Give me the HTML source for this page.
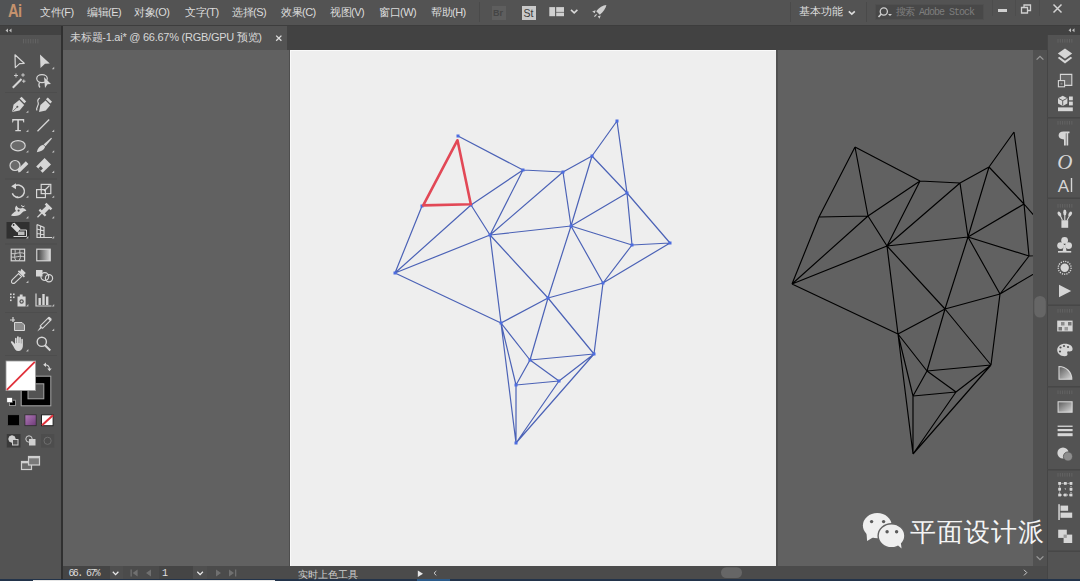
<!DOCTYPE html>
<html><head><meta charset="utf-8">
<style>
*{margin:0;padding:0;box-sizing:border-box}
html,body{width:1080px;height:581px;overflow:hidden;background:#535353;font-family:"Liberation Sans",sans-serif;position:relative}
div,span,svg{position:absolute}
#menubar{left:0;top:0;width:1080px;height:25px;background:#535353}
#menuline{left:0;top:25px;width:1080px;height:1px;background:#3d3d3d}
#tabrow{left:63px;top:26px;width:984px;height:24px;background:#424242}
#tab{left:63px;top:26px;width:224px;height:24px;background:#535353}
#ltool{left:0;top:26px;width:61px;height:554px;background:#535353}
#ltoolhead{left:0;top:26px;width:61px;height:9px;background:#424242}
#lsep{left:61px;top:26px;width:2px;height:553px;background:#303030}
#canvas{left:63px;top:50px;width:970px;height:516px;background:#616161}
#artboard{left:290px;top:50px;width:486px;height:516px;background:#eeeeee;box-shadow:inset 1px 1px 0 #f9f9f9,-1px 0 0 #4e4e4e}
#abshadow{left:776px;top:50px;width:2px;height:518px;background:#505050}
#vscroll{left:1033px;top:50px;width:14px;height:516px;background:#515151}
#rpanel{left:1047px;top:26px;width:33px;height:554px;background:#535353}
#rsep{left:1047px;top:26px;width:1px;height:553px;background:#454545}
#rhead{left:1047px;top:26px;width:33px;height:9px;background:#424242}
#status{left:63px;top:566px;width:984px;height:13px;background:#4b4b4b}
#bottom{left:0;top:579px;width:1080px;height:2px;background:#22334a}
.menu{top:5.5px;font-size:11px;line-height:13px;color:#dcdcdc;white-space:nowrap;letter-spacing:-0.5px}
.t{white-space:nowrap}
</style></head><body>
<div id="menubar"></div>
<div id="menuline"></div>
<div id="tabrow"></div>
<div id="tab"></div>
<div id="ltool"></div>
<div id="ltoolhead"></div>
<div id="lsep"></div>
<div id="canvas"></div>
<div id="artboard"></div>
<div id="abshadow"></div>
<svg style="left:0;top:0" width="1080" height="581" viewBox="0 0 1080 581">
<defs><clipPath id="cv"><rect x="63" y="50" width="970" height="516"/></clipPath></defs>
<g clip-path="url(#cv)">
<path d="M855 147L920 181 M819 217L792 284 M792 284L868 216 M792 284L887 246 M792 284L898 334 M868 216L920 181 M868 216L887 246 M920 181L887 246 M920 181L960 183 M960 183L887 246 M960 183L989 167 M960 183L968 237 M989 167L1014 132 M989 167L1024 204 M989 167L968 237 M1014 132L1024 204 M1024 204L968 237 M1024 204L1029 256 M1024 204L1067 254 M1029 256L1067 254 M968 237L1029 256 M887 246L968 237 M968 237L945 309 M968 237L1000 294 M1029 256L1000 294 M1067 254L1000 294 M887 246L945 309 M887 246L898 334 M898 334L945 309 M945 309L1000 294 M1000 294L991 365 M945 309L991 365 M945 309L927 371 M898 334L927 371 M898 334L913 396 M898 334L913 454 M927 371L991 365 M927 371L913 396 M927 371L956 392 M913 396L956 392 M956 392L991 365 M913 396L913 454 M956 392L913 454 M991 365L913 454 M855 147L819 217 M855 147L868 216 M819 217L868 216" stroke="#000" stroke-width="1.15" fill="none"/>
<path d="M458 136L523 170 M422 206L395 273 M395 273L471 205 M395 273L490 235 M395 273L501 323 M471 205L523 170 M471 205L490 235 M523 170L490 235 M523 170L563 172 M563 172L490 235 M563 172L592 156 M563 172L571 226 M592 156L617 121 M592 156L627 193 M592 156L571 226 M617 121L627 193 M627 193L571 226 M627 193L632 245 M627 193L670 243 M632 245L670 243 M571 226L632 245 M490 235L571 226 M571 226L548 298 M571 226L603 283 M632 245L603 283 M670 243L603 283 M490 235L548 298 M490 235L501 323 M501 323L548 298 M548 298L603 283 M603 283L594 354 M548 298L594 354 M548 298L530 360 M501 323L530 360 M501 323L516 385 M501 323L516 443 M530 360L594 354 M530 360L516 385 M530 360L559 381 M516 385L559 381 M559 381L594 354 M516 385L516 443 M559 381L516 443 M594 354L516 443" stroke="#4b62b6" stroke-width="1.2" fill="none"/>
<g fill="#4d6de0"><rect x="456.5" y="134.5" width="3" height="3"/><rect x="521.5" y="168.5" width="3" height="3"/><rect x="561.5" y="170.5" width="3" height="3"/><rect x="590.5" y="154.5" width="3" height="3"/><rect x="615.5" y="119.5" width="3" height="3"/><rect x="625.5" y="191.5" width="3" height="3"/><rect x="668.5" y="241.5" width="3" height="3"/><rect x="630.5" y="243.5" width="3" height="3"/><rect x="569.5" y="224.5" width="3" height="3"/><rect x="488.5" y="233.5" width="3" height="3"/><rect x="469.5" y="203.5" width="3" height="3"/><rect x="420.5" y="204.5" width="3" height="3"/><rect x="393.5" y="271.5" width="3" height="3"/><rect x="601.5" y="281.5" width="3" height="3"/><rect x="499.5" y="321.5" width="3" height="3"/><rect x="546.5" y="296.5" width="3" height="3"/><rect x="528.5" y="358.5" width="3" height="3"/><rect x="592.5" y="352.5" width="3" height="3"/><rect x="514.5" y="383.5" width="3" height="3"/><rect x="557.5" y="379.5" width="3" height="3"/><rect x="514.5" y="441.5" width="3" height="3"/></g>
<path d="M457.5 140.2L423.2 205.4L470.8 204.3Z" stroke="#e24856" stroke-width="2.6" fill="none" stroke-linejoin="round"/>
</g>
</svg>
<div id="vscroll"></div>
<div id="rpanel"></div>
<div id="rsep"></div>
<div id="rhead"></div>
<div id="status"></div>
<div id="bottom"></div>
<!--MENU-->
<div style="left:0;top:0;width:30px;height:25px;background:#515355"></div><span class="t" style="left:7.5px;top:0.5px;font-size:17.5px;line-height:20px;font-weight:bold;color:#c4926d;letter-spacing:-0.8px;transform:scaleX(0.84);transform-origin:0 0">Ai</span>
<span class="menu" style="left:40px">文件(F)</span>
<span class="menu" style="left:87px">编辑(E)</span>
<span class="menu" style="left:134px">对象(O)</span>
<span class="menu" style="left:185px">文字(T)</span>
<span class="menu" style="left:232px">选择(S)</span>
<span class="menu" style="left:281px">效果(C)</span>
<span class="menu" style="left:330px">视图(V)</span>
<span class="menu" style="left:379px">窗口(W)</span>
<span class="menu" style="left:431px">帮助(H)</span>
<div style="left:479px;top:2px;width:1px;height:20px;background:#4a4a4a"></div>
<div style="left:492px;top:6px;width:14px;height:14px;background:#5e5e5e"></div>
<span class="t" style="left:493px;top:8px;font-size:9px;line-height:10px;color:#454545;font-weight:bold">Br</span>
<div style="left:522px;top:6px;width:14px;height:14px;background:#c9c9c9"></div>
<span class="t" style="left:523.5px;top:7px;font-size:10.5px;line-height:12px;color:#3a3a3a">St</span>
<svg style="left:545px;top:2px" width="70" height="20" viewBox="545 2 70 20">
<g fill="#d0d0d0">
<rect x="549.3" y="7.1" width="5.8" height="9.1"/><rect x="556.2" y="7.1" width="7.8" height="4.8"/><rect x="556.2" y="12.6" width="7.8" height="3.6"/>
</g>
<path d="M571 9.8L574.2 12.8L577.4 9.8" stroke="#d8d8d8" stroke-width="1.6" fill="none"/>
<path d="M606.4 5C603 5.2 599 7.6 596.2 11.2L599.8 14.8C603.4 12 605.8 8 606.4 5Z" fill="#cfcfcf"/>
<path d="M595.6 10.2L592.2 11.6L594.8 13.2Z M600.8 15.4L599.4 18.8L597.8 16.2Z" fill="#cfcfcf"/>
<path d="M596.6 14.4L594.4 16.6" stroke="#cfcfcf" stroke-width="1.2"/>
</svg>
<div style="left:790px;top:2px;width:1px;height:20px;background:#4a4a4a"></div>
<span class="menu" style="left:799px;top:5px;font-size:10.5px;letter-spacing:-0.1px">基本功能</span>
<svg style="left:845px;top:8px" width="14" height="10" viewBox="0 0 14 10"><path d="M3.8 3.4L6.8 6.2L9.8 3.4" stroke="#dcdcdc" stroke-width="1.6" fill="none"/></svg>
<div style="left:866px;top:2px;width:1px;height:20px;background:#4a4a4a"></div>
<div style="left:875px;top:4px;width:109px;height:16px;background:#484848;border:1px solid #4f4f4f"></div>
<svg style="left:875px;top:4px" width="20" height="16" viewBox="0 0 20 16">
<circle cx="8.8" cy="7.5" r="3.6" stroke="#cfcfcf" stroke-width="1.3" fill="none"/>
<path d="M6.3 10L3.5 13" stroke="#cfcfcf" stroke-width="1.6"/>
<path d="M13 10h4l-2 2z" fill="#cfcfcf"/>
</svg>
<span class="t" style="left:896px;top:6.5px;font-size:10px;line-height:12px;color:#7e7e7e;font-family:'Liberation Mono',monospace;letter-spacing:-1px">搜索 Adobe Stock</span>
<div style="left:992px;top:0;width:1px;height:16px;background:#4d4d4d"></div>
<div style="left:1015px;top:0;width:1px;height:16px;background:#4d4d4d"></div>
<div style="left:1039px;top:0;width:1px;height:16px;background:#4d4d4d"></div>
<div style="left:998px;top:9px;width:9px;height:3px;background:#d0d0d0"></div>
<svg style="left:1018px;top:2px" width="16" height="13" viewBox="0 0 16 13">
<path d="M3.5 5.5h6v5.5h-6z M6 5.5V3h6.5v5.5H9.5" stroke="#d0d0d0" stroke-width="1.3" fill="none"/>
</svg>
<svg style="left:1050px;top:2px" width="15" height="13" viewBox="0 0 15 13">
<path d="M3.5 2.5L11.5 10.5M11.5 2.5L3.5 10.5" stroke="#d4d4d4" stroke-width="1.5"/>
</svg>
<!--/MENU-->
<!--TAB-->
<span class="t" style="left:70px;top:31px;font-size:11px;line-height:13px;color:#d8d8d8;letter-spacing:-0.25px">未标题-1.ai* @ 66.67% (RGB/GPU 预览)</span>
<!--/TAB-->
<!--TOOLBAR-->
<svg style="left:0;top:25px" width="62" height="556" viewBox="0 25 62 556">
<defs>
<linearGradient id="gg" x1="0" x2="1" y1="0" y2="0"><stop offset="0" stop-color="#3a3a3a"/><stop offset="1" stop-color="#d8d8d8"/></linearGradient>
<linearGradient id="gp" x1="0" x2="1" y1="0" y2="1"><stop offset="0" stop-color="#b07ab8"/><stop offset="1" stop-color="#6e3a78"/></linearGradient>
</defs>
<!-- header arrows -->
<path d="M8 28.5L5.5 30.5L8 32.5Z M11.5 28.5L9 30.5L11.5 32.5Z" fill="#bdbdbd"/>
<!-- grip -->
<g fill="#636363"><rect x="23.0" y="39" width="1" height="4.4"/><rect x="25.4" y="39" width="1" height="4.4"/><rect x="27.8" y="39" width="1" height="4.4"/><rect x="30.2" y="39" width="1" height="4.4"/><rect x="32.6" y="39" width="1" height="4.4"/><rect x="35.0" y="39" width="1" height="4.4"/><rect x="37.4" y="39" width="1" height="4.4"/></g>
<g stroke="#d6d6d6" fill="none" stroke-width="1.2">
<!-- selection -->
<path d="M15 54.8L24.2 63.3L19.6 63.6L15.3 67.6Z" stroke-linejoin="round"/>
<path d="M11.2 186.2L16 183.2V189.2Z" fill="#d6d6d6" stroke="none"/>
<!-- magic wand -->
<path d="M12.8 87.8L21.5 79" stroke-width="2"/>
<path d="M16 73.5v4M14 75.5h4 M23 73.2v3.6M21.2 75h3.6 M23.8 79.5v3.4M22.1 81.2h3.4" stroke-width="0.9"/>
<!-- lasso -->
<ellipse cx="42" cy="78.6" rx="5.3" ry="4" />
<path d="M39.5 82.5q-1.5 3 0.5 5"/>
<!-- curvature line -->
<path d="M37 110.5c-2-3 3-5 1-8.5c-0.8-1.5 0.5-3.5 2-4"/>
<!-- line -->
<path d="M37.5 131.2L49.2 119.5" stroke-width="1.3"/>
<!-- ellipse -->
<ellipse cx="18" cy="145.7" rx="7.2" ry="5.1" fill="#6b6b6b"/>
<!-- shaper -->
<circle cx="15" cy="165.5" r="5" fill="#6b6b6b"/>
<!-- rotate -->
<path d="M14.6 186.2A6.2 6.2 0 1 1 12.4 193.4" stroke-width="1.5"/><path d="M12.4 193.4A6.2 6.2 0 0 0 18.4 197" stroke-dasharray="1 1"/>
<!-- scale -->
<rect x="36.6" y="189.6" width="8.8" height="8" />
<rect x="41.2" y="184.4" width="9.6" height="9.2" />
<path d="M44 191L49.5 185.5"/>
<!-- perspective grid -->
<path d="M37 224.5V237.5H52 M37 224.5L44 227.5V237.5 M37 229L44 231 M37 233.5L44 234.5 M40.5 226v11.5"/>
<!-- mesh -->
<rect x="11.2" y="249.2" width="13.4" height="11.6"/>
<path d="M15 249.5c1 4-2 7 1 11 M20 249.5c-1 4 2 7-1 11 M11.5 253.5c4 1 7-2 13 0 M11.5 257c4 1 8-2 13 0" stroke-width="0.9"/>
<!-- gradient -->
<rect x="36.8" y="249.2" width="13.4" height="11.6" fill="url(#gg)"/>
<!-- blend -->
<circle cx="44.8" cy="276.6" r="3.9"/><circle cx="49" cy="278.3" r="3.6"/>
<!-- graph -->
<path d="M36 293.5V306H51.5"/>
<!-- artboard -->
<path d="M13 317v5 M10 320h5"/>
<!-- zoom -->
<circle cx="41.8" cy="341.8" r="4.6" stroke-width="1.4"/>
<path d="M45 345.2L50.3 350.5" stroke-width="2"/>
</g>
<g fill="#d6d6d6">
<!-- direct selection -->
<path d="M40 54.5L49.8 63.5L45 63.8L40.5 68Z"/>
<!-- lasso cursor -->
<path d="M44 77L51 84L47.5 84.2L45 88Z"/>
<!-- pen -->
<path d="M12 112L13.6 104.6L19.3 100L24.2 104.9L19.6 110.5Z"/>
<path d="M19.6 98.6L21.6 96.8L26.2 101.4L24.4 103.2Z"/>
<circle cx="17.4" cy="106.7" r="1" fill="#535353"/>
<path d="M12.5 111.5L17 107.2" stroke="#535353" stroke-width="0.7"/>
<!-- curvature pen -->
<path d="M39 112L40.4 105L45.6 100.6L50.2 105.2L45.8 110.6Z"/>
<path d="M45.9 99.2L47.8 97.5L52 101.7L50.3 103.4Z"/>
<!-- type -->
<path d="M12.2 119H24.2V122.4H23.4L22.8 120.4H18.9V129.9H20.9V131.2H15.3V129.9H17.3V120.4H13.6L13 122.4H12.2Z"/>
<!-- paintbrush -->
<path d="M51.2 137.8L52 138.6L45.5 146.3L43.6 144.4Z"/>
<path d="M43.2 144.8L45.2 146.8C44 150 41 151.8 36.8 152.2C37.6 148.6 39.5 145.8 43.2 144.8Z"/>
<!-- shaper pencil -->
<path d="M18.5 172.6L17.6 169.5L25.8 161.3L28.4 163.9L20.2 172.1Z"/>
<!-- eraser -->
<path d="M36.2 166.4L44.6 158L51 164.4L42.6 172.8Z"/>
<path d="M38.2 168.4L40.6 166L43 168.4L40.6 170.8Z" fill="#535353"/>
<!-- width tool -->
<path d="M11 215.5C12.5 213.5 14 212 16.2 211C14.6 209.6 14.6 207.2 16.4 205.4C17.4 207.2 18.6 208.4 20.2 208.6C22.4 207.6 25 208 26.4 211C24.6 210.6 23 211.2 21.8 213C20 215.6 15.6 216.8 11 215.5Z"/>
<circle cx="18.6" cy="210.6" r="1.1" fill="#535353"/>
<path d="M21.5 205L22.5 207L24.5 206" stroke="#d6d6d6" stroke-width="1" fill="none"/>
<!-- puppet pin -->
<path d="M37.5 217.2L42 212.7" stroke="#d6d6d6" stroke-width="1.3"/>
<path d="M39.4 209.6L45.6 215.8" stroke="#d6d6d6" stroke-width="2.2"/>
<path d="M42.6 212.6L48.2 207" stroke="#d6d6d6" stroke-width="4.2"/>
<path d="M45.6 203.6L51.4 209.4" stroke="#d6d6d6" stroke-width="2.6"/>
<!-- eyedropper -->
<path d="M21.5 268.8L25.8 273.1L23.8 275.1L25 276.3L23.8 277.5L17.8 271.5L19 270.3L20.2 271.5Z"/>
<path d="M18.6 273.6L21.6 276.6L14.5 283.2C13 283.8 11.5 283 11.5 282C11.2 280.6 12.2 279.8 12.6 279.4Z" fill="none" stroke="#d6d6d6" stroke-width="1.1"/>
<!-- blend square -->
<rect x="36" y="270" width="6.5" height="6.5"/>
<!-- symbol sprayer -->
<path d="M17.5 296.5H19.8V294.5H22.6V296.5H25.6V306.5H17.5Z"/>
<circle cx="21.6" cy="301.5" r="2.2" fill="#535353"/>
<circle cx="21.6" cy="301.5" r="1" fill="#d6d6d6"/>
<g><rect x="10" y="293.5" width="1.6" height="1.6"/><rect x="13" y="293.5" width="1.6" height="1.6"/><rect x="10" y="296.5" width="1.6" height="1.6"/><rect x="13" y="296.5" width="1.6" height="1.6"/><rect x="10" y="299.5" width="1.6" height="1.6"/></g>
<!-- graph bars -->
<rect x="38.5" y="298" width="2.4" height="7"/><rect x="42.3" y="294" width="2.4" height="11"/><rect x="46" y="296.5" width="2.4" height="8.5"/>
<!-- artboard -->
<path d="M14.5 322.5H22L24.5 325V330.5H14.5Z" fill="#8c8c8c" stroke="#d6d6d6" stroke-width="1"/>
<!-- slice knife -->
<path d="M48.6 317.5L51 319.9L42.6 328.3L40.2 325.9Z" fill="none" stroke="#d6d6d6" stroke-width="1.1"/><path d="M40.6 326.6L42 328L37.2 331.6Z"/><path d="M47.6 318.5L50 320.9L51.8 319.1L49.4 316.7Z"/>
<!-- hand -->
<path d="M13.5 346.5L11 342.5C10.5 341.5 11.8 340.8 12.6 341.5L15 344V338.5C15 337.5 16.6 337.5 16.6 338.5V343H17V337C17 336 18.8 336 18.8 337V343H19.2V337.8C19.2 336.8 20.9 336.8 20.9 337.8V343.5H21.3V339.5C21.3 338.6 22.9 338.6 22.9 339.5V345.5C22.9 349 21 351 18 351C16 351 14.6 349 13.5 346.5Z"/>
</g>
<!-- shape builder selected -->
<rect x="6.5" y="222" width="23" height="16.6" fill="#303030"/>
<g stroke="#d6d6d6" fill="none" stroke-width="1"><path d="M13.5 236.5H26.5V230H20"/></g>
<rect x="18" y="231.5" width="6.5" height="3.6" fill="#bdbdbd"/>
<path d="M12.5 223.5L14.5 222.8L20.6 229L17.2 232.4L11 226.2Z" fill="#d6d6d6"/>
<circle cx="13.6" cy="225" r="0.9" fill="#303030"/>
<!-- flyout triangles -->
<g fill="#bdbdbd">
<path d="M54.2 66.8V69.2H51.8Z M28.4 110.4V112.8H26Z M28.4 129.6V132H26Z M54.2 129.6V132H51.8Z M28.4 150.2V152.6H26Z M54.2 150.2V152.6H51.8Z M28.4 170.6V173H26Z M54.2 170.6V173H51.8Z M28.4 195.4V197.8H26Z M54.2 195.4V197.8H51.8Z M28.4 216V218.4H26Z M54.2 216V218.4H51.8Z M28.4 236V238.4H26Z M54.2 236V238.4H51.8Z M28.4 280.6V283H26Z M28.4 304V306.4H26Z M54.2 304V306.4H51.8Z M54.2 328.5V330.9H51.8Z M28.4 349V351.4H26Z"/>
</g>
<!-- separators -->
<g fill="#4d4d4d"><rect x="5" y="92" width="52" height="1"/><rect x="5" y="178.5" width="52" height="1"/><rect x="5" y="243.5" width="52" height="1"/><rect x="5" y="312" width="52" height="1"/><rect x="5" y="355" width="52" height="1"/></g>
<!-- fill/stroke -->
<rect x="21.2" y="376.2" width="29.6" height="29.6" fill="#000" stroke="#a8a8a8" stroke-width="1"/>
<rect x="28" y="383.8" width="15.8" height="15" fill="#535353" stroke="#a8a8a8" stroke-width="1"/>
<rect x="6" y="361" width="29.6" height="29.6" fill="#fff" stroke="#9a9a9a" stroke-width="0.8"/>
<path d="M6.8 389.8L34.8 361.8" stroke="#e0303a" stroke-width="1.8"/>
<path d="M44.5 364.8Q49.5 364.8 49.5 369.5" stroke="#d6d6d6" stroke-width="1.1" fill="none"/>
<path d="M43.2 364.8L46 362.6V367Z M49.5 371.2L47.3 368.4H51.7Z" fill="#d6d6d6"/>
<rect x="9.5" y="400.2" width="6" height="5.4" fill="#000" stroke="#aaa" stroke-width="0.8"/>
<rect x="6.8" y="397.5" width="5.6" height="5.2" fill="#fff" stroke="#444" stroke-width="0.6"/>
<!-- color / gradient / none -->
<rect x="7.7" y="414.8" width="11.6" height="10.9" fill="#000" stroke="#5e5e5e" stroke-width="0.6"/>
<rect x="24.9" y="414.8" width="11.3" height="10.9" fill="url(#gp)" stroke="#2a2a2a" stroke-width="0.8"/>
<rect x="41.5" y="414.8" width="11.6" height="10.9" fill="#fff" stroke="#222" stroke-width="1"/>
<path d="M42 425.3L53 415.2" stroke="#e0303a" stroke-width="2"/>
<!-- draw modes -->
<rect x="6.8" y="434" width="13.7" height="13.5" fill="#3a3a3a"/>
<g stroke="#cfcfcf" stroke-width="1" fill="none">
<circle cx="12" cy="439" r="3.2" fill="#cfcfcf"/><rect x="12.5" y="439.5" width="5.5" height="5.5" fill="#535353"/>
<circle cx="29" cy="439" r="3.2"/><rect x="29.5" y="439.5" width="5.5" height="5.5" fill="#cfcfcf"/>
</g>
<g stroke="#6e6e6e" stroke-width="1" fill="none"><rect x="41" y="434" width="13.3" height="13.5" fill="#4d4d4d" stroke="none"/><circle cx="47.6" cy="440.8" r="3.6"/></g>
<!-- screen mode -->
<g stroke="#cfcfcf" stroke-width="1.2"><rect x="21.5" y="461.5" width="10" height="8" fill="#6a6a6a"/><rect x="28.5" y="456.5" width="11" height="8.5" fill="#7a7a7a"/></g>
<rect x="28.5" y="456.5" width="11" height="1.8" fill="#cfcfcf"/>
<rect x="21.5" y="461.5" width="7" height="1.8" fill="#cfcfcf"/>
</svg>
<!--/TOOLBAR-->
<!--RPANEL-->
<svg style="left:1047px;top:25px" width="33" height="556" viewBox="1047 25 33 556">
<defs>
<linearGradient id="rg" x1="0" x2="1" y1="0" y2="1"><stop offset="0" stop-color="#5a5a5a"/><stop offset="1" stop-color="#d8d8d8"/></linearGradient>
</defs>
<path d="M1071 28.3L1068.5 30.3L1071 32.3Z M1074.5 28.3L1072 30.3L1074.5 32.3Z" fill="#bdbdbd"/>
<g fill="#474747"><rect x="1047" y="117" width="33" height="1.5"/><rect x="1047" y="197.5" width="33" height="1.5"/><rect x="1047" y="304.5" width="33" height="1.5"/><rect x="1047" y="386" width="33" height="1.5"/><rect x="1047" y="469" width="33" height="1.5"/><rect x="1047" y="550.5" width="33" height="1.5"/></g>
<g fill="#636363"><rect x="1057.5" y="39.0" width="1" height="3.6"/><rect x="1059.8" y="39.0" width="1" height="3.6"/><rect x="1062.1" y="39.0" width="1" height="3.6"/><rect x="1064.4" y="39.0" width="1" height="3.6"/><rect x="1066.7" y="39.0" width="1" height="3.6"/><rect x="1069.0" y="39.0" width="1" height="3.6"/><rect x="1071.3" y="39.0" width="1" height="3.6"/><rect x="1057.5" y="121.0" width="1" height="3.6"/><rect x="1059.8" y="121.0" width="1" height="3.6"/><rect x="1062.1" y="121.0" width="1" height="3.6"/><rect x="1064.4" y="121.0" width="1" height="3.6"/><rect x="1066.7" y="121.0" width="1" height="3.6"/><rect x="1069.0" y="121.0" width="1" height="3.6"/><rect x="1071.3" y="121.0" width="1" height="3.6"/><rect x="1057.5" y="204.0" width="1" height="3.6"/><rect x="1059.8" y="204.0" width="1" height="3.6"/><rect x="1062.1" y="204.0" width="1" height="3.6"/><rect x="1064.4" y="204.0" width="1" height="3.6"/><rect x="1066.7" y="204.0" width="1" height="3.6"/><rect x="1069.0" y="204.0" width="1" height="3.6"/><rect x="1071.3" y="204.0" width="1" height="3.6"/><rect x="1057.5" y="309.0" width="1" height="3.6"/><rect x="1059.8" y="309.0" width="1" height="3.6"/><rect x="1062.1" y="309.0" width="1" height="3.6"/><rect x="1064.4" y="309.0" width="1" height="3.6"/><rect x="1066.7" y="309.0" width="1" height="3.6"/><rect x="1069.0" y="309.0" width="1" height="3.6"/><rect x="1071.3" y="309.0" width="1" height="3.6"/><rect x="1057.5" y="390.5" width="1" height="3.6"/><rect x="1059.8" y="390.5" width="1" height="3.6"/><rect x="1062.1" y="390.5" width="1" height="3.6"/><rect x="1064.4" y="390.5" width="1" height="3.6"/><rect x="1066.7" y="390.5" width="1" height="3.6"/><rect x="1069.0" y="390.5" width="1" height="3.6"/><rect x="1071.3" y="390.5" width="1" height="3.6"/><rect x="1057.5" y="473.0" width="1" height="3.6"/><rect x="1059.8" y="473.0" width="1" height="3.6"/><rect x="1062.1" y="473.0" width="1" height="3.6"/><rect x="1064.4" y="473.0" width="1" height="3.6"/><rect x="1066.7" y="473.0" width="1" height="3.6"/><rect x="1069.0" y="473.0" width="1" height="3.6"/><rect x="1071.3" y="473.0" width="1" height="3.6"/></g>
<g fill="#d6d6d6">
<!-- layers -->
<path d="M1065 48.5L1072.2 53.6L1065 58.7L1057.8 53.6Z"/>
<path d="M1059.3 56.8L1065 60.8L1070.7 56.8L1072.2 58L1065 63.4L1057.8 58Z"/>
<!-- libraries cube -->
<path d="M1062.7 95.8L1067.4 98.2V103.5L1062.7 105.9L1058 103.5V98.2Z"/>
<path d="M1062.7 100.6L1058.6 98.5M1062.7 100.6L1066.8 98.5M1062.7 100.6V105.5" stroke="#535353" stroke-width="0.9"/>
<rect x="1069" y="96.5" width="3.8" height="3.8"/><rect x="1069" y="101.6" width="3.8" height="3.8"/>
<rect x="1058" y="107.4" width="14.8" height="3.8"/>
<!-- paragraph -->
<path d="M1063.5 131.6H1069.5V133.2H1068.2V145.6H1066.5V133.2H1065.8V145.6H1064V139.4C1060.5 139.4 1058.6 137.8 1058.6 135.5C1058.6 133.2 1060.5 131.6 1063.5 131.6Z"/>
<!-- club -->
<circle cx="1064.6" cy="240.4" r="3.4"/><circle cx="1060.6" cy="245.6" r="3.4"/><circle cx="1068.6" cy="245.6" r="3.4"/>
<path d="M1063.8 245H1065.4L1066.6 251.5H1062.6Z"/>
<rect x="1058" y="251" width="13.2" height="1.6"/>
<!-- play -->
<path d="M1059 284.8L1071.2 291L1059 297.3Z"/>
<!-- swatches -->
<rect x="1057.2" y="320.6" width="15.4" height="10.8"/>
<!-- palette -->
<path d="M1065 343.8C1069.8 343.8 1072.6 346.2 1072.6 349C1072.6 351.4 1070.4 351.6 1068.8 351.4C1067.4 351.2 1066.8 352.2 1067.4 353.4C1068 354.8 1066.8 356.2 1064.6 356.2C1060.4 356.2 1057.2 353.4 1057.2 350C1057.2 346.4 1060.6 343.8 1065 343.8Z"/>
<!-- stroke -->
<rect x="1057.6" y="425.6" width="15" height="1.3"/><rect x="1057.6" y="429" width="15" height="2.2"/><rect x="1057.6" y="433.2" width="15" height="3"/>
<!-- transparency -->
<circle cx="1063" cy="453" r="5.6"/>
<!-- align -->
<rect x="1058.3" y="504.2" width="1.5" height="15.8"/>
<rect x="1060.5" y="505.6" width="7.6" height="5.2"/><rect x="1060.5" y="512.6" width="11.7" height="5.2"/>
<!-- pathfinder -->
<rect x="1058.2" y="529.7" width="8.6" height="8.2"/><rect x="1063.6" y="534.6" width="8.6" height="8.4"/>
</g>
<g stroke="#d6d6d6" fill="none" stroke-width="1.3">
<!-- artboards -->
<path d="M1060.4 74.4H1071.8V85.4H1060.4Z" fill="#686868" stroke-width="1.1"/>
<rect x="1058.4" y="80.6" width="6.2" height="6.2" fill="#535353" stroke-width="1.1"/>
<rect x="1060.5" y="82.7" width="2" height="2" fill="#888" stroke="none"/>
<!-- italic O -->

<!-- graphic styles -->
<circle cx="1064.7" cy="267.8" r="6.4" stroke-dasharray="1.2 1.1" stroke-width="1.4"/>
<!-- color guide -->
<path d="M1059 366.5V379.3H1071.8C1071.8 372.2 1066.2 366.5 1059 366.5Z" fill="url(#rg)" stroke-width="1.1"/>
<!-- gradient -->
<rect x="1058.1" y="401.8" width="14" height="10.4" fill="url(#rg)" stroke-width="1.1"/>
<!-- transform -->
<rect x="1059.6" y="483.4" width="11.4" height="11.6" stroke-width="1" stroke-dasharray="1 1"/><rect x="1058.2" y="482.0" width="2.8" height="2.8" fill="#d6d6d6" stroke="none"/><rect x="1063.9" y="482.0" width="2.8" height="2.8" fill="#d6d6d6" stroke="none"/><rect x="1069.6" y="482.0" width="2.8" height="2.8" fill="#d6d6d6" stroke="none"/><rect x="1058.2" y="487.8" width="2.8" height="2.8" fill="#d6d6d6" stroke="none"/><rect x="1069.6" y="487.8" width="2.8" height="2.8" fill="#d6d6d6" stroke="none"/><rect x="1058.2" y="493.6" width="2.8" height="2.8" fill="#d6d6d6" stroke="none"/><rect x="1063.9" y="493.6" width="2.8" height="2.8" fill="#d6d6d6" stroke="none"/><rect x="1069.6" y="493.6" width="2.8" height="2.8" fill="#d6d6d6" stroke="none"/><rect x="1064.6" y="488.5" width="1.4" height="1.4" fill="#d6d6d6" stroke="none"/>
<!-- brushes -->
<path d="M1062.4 220L1060.2 215.5M1064.8 220V214M1067.2 220L1069.6 215.5" stroke-width="1.1"/>
</g>
<g fill="#d6d6d6">
<ellipse cx="1059.4" cy="214" rx="1.6" ry="2.6" transform="rotate(-30 1059.4 214)"/><ellipse cx="1064.8" cy="212.4" rx="1.6" ry="2.8"/><ellipse cx="1070.2" cy="214" rx="1.6" ry="2.6" transform="rotate(30 1070.2 214)"/>
<path d="M1061.4 220.2H1068.2V227.8H1061.4Z"/>
<text x="1057.2" y="168.6" font-family="Liberation Serif" font-style="italic" font-size="21" fill="#d6d6d6">O</text>
<!-- A| -->
<text x="1057.8" y="192" font-family="Liberation Sans" font-size="17" fill="#d6d6d6">A</text>
<rect x="1070.8" y="178" width="1.4" height="14"/>
<circle cx="1064.7" cy="267.8" r="4.2"/>
<rect x="1064" y="489" width="1.5" height="1.5" fill="#535353"/>
</g>
<g fill="#535353"><rect x="1061" y="322" width="3.5" height="3.5" fill="#8a8a8a"/><rect x="1068" y="322" width="3.5" height="3.5" fill="#777"/><rect x="1058.5" y="327" width="3.5" height="3.5" fill="#777"/><rect x="1064.5" y="327" width="3.5" height="3.5" fill="#999"/>
<circle cx="1068" cy="456.5" r="4.6" fill="#8d8d8d" stroke="#535353" stroke-width="0.8"/>
<circle cx="1060.5" cy="347.5" r="1.1"/><circle cx="1064" cy="346" r="1.1"/><circle cx="1068" cy="347" r="1.1"/><circle cx="1060" cy="351.5" r="1.1"/>
<path d="M1063.6 537.9H1066.8V534.6H1063.6Z" fill="#9a9a9a"/>
</g>
</svg>
<!--/RPANEL-->
<!--MISC-->
<svg style="left:260px;top:30px" width="30" height="16" viewBox="260 30 30 16"><path d="M276.2 35.6L281.4 40.8M281.4 35.6L276.2 40.8" stroke="#dedede" stroke-width="1.3"/></svg>
<!-- vscroll -->
<svg style="left:1033px;top:50px" width="14" height="516" viewBox="1033 50 14 516">
<path d="M1036.6 59.6L1040 56.3L1043.4 59.6" stroke="#9a9a9a" stroke-width="1.3" fill="none"/>
<rect x="1034.3" y="296" width="11.5" height="21.6" rx="5.5" fill="#666666"/>
<path d="M1036.6 556.4L1040 559.7L1043.4 556.4" stroke="#9a9a9a" stroke-width="1.3" fill="none"/>
</svg>
<!-- status bar -->
<div style="left:63px;top:566px;width:47px;height:13px;background:#454545"></div>
<div style="left:110px;top:566px;width:13px;height:13px;background:#4f4f4f"></div>
<div style="left:159px;top:566px;width:34px;height:13px;background:#454545"></div>
<div style="left:193px;top:566px;width:14px;height:13px;background:#4f4f4f"></div>
<span class="t" style="left:68.5px;top:568px;font-size:10px;line-height:12px;color:#dcdcdc;font-family:'Liberation Mono',monospace;letter-spacing:-1.65px">66. 67%</span>
<span class="t" style="left:162px;top:568px;font-size:10px;line-height:12px;color:#e0e0e0;font-family:'Liberation Mono',monospace">1</span>
<svg style="left:63px;top:566px" width="984" height="13" viewBox="63 566 984 13">
<path d="M112.8 571.8L115.6 574.6L118.4 571.8 M197.3 571.8L200.1 574.6L202.9 571.8" stroke="#e8e8e8" stroke-width="1.3" fill="none"/>
<g fill="#707070"><rect x="130.5" y="569.5" width="1.3" height="7"/><path d="M137.6 569.5V576.5L132.6 573Z M151 569.5V576.5L146 573Z M216 569.5V576.5L221 573Z M229 569.5V576.5L234 573Z"/><rect x="235" y="569.5" width="1.3" height="7"/></g>
<path d="M417.8 570.4V577L423 573.7Z" fill="#e8e8e8"/>
<path d="M436.3 571L434 573.2L436.3 575.4" stroke="#cfcfcf" stroke-width="1" fill="none"/>
<rect x="721" y="567.3" width="21" height="10.7" rx="5.3" fill="#666666"/>
<path d="M1024 569.8L1026.8 572.6L1024 575.4" stroke="#cfcfcf" stroke-width="1" fill="none"/>
</svg>
<span class="t" style="left:298px;top:569px;font-size:10px;line-height:12px;color:#d0d0d0;font-family:'Liberation Serif',serif">实时上色工具</span>
<!-- bottom strip -->
<div style="left:33px;top:580px;width:242px;height:1px;background:#e6e6e6"></div>
<div style="left:417px;top:579px;width:33px;height:2px;background:#2a5a8a"></div>
<!-- watermark -->
<svg style="left:855px;top:505px" width="55" height="50" viewBox="855 505 55 50">
<g fill="#efefef">
<ellipse cx="877.3" cy="525.6" rx="14.4" ry="12.6"/>
<path d="M866.5 533L867.1 541L874.5 536.5Z"/>
<ellipse cx="891.5" cy="535.8" rx="13.4" ry="12" stroke="#636363" stroke-width="1.4"/>
<path d="M897 544.5L901.6 548.6L900.6 541.5Z"/>
</g>
<g fill="#5a5a5a"><circle cx="871.6" cy="521.6" r="1.7"/><circle cx="883.6" cy="521.6" r="1.7"/><circle cx="887.1" cy="531.8" r="1.7"/><circle cx="896.6" cy="531.8" r="1.7"/></g>
</svg>
<span class="t" style="left:910px;top:515px;font-size:26px;line-height:34px;color:#f4f4f4;letter-spacing:1px;font-weight:300">平面设计派</span>
<!--/MISC-->
</body></html>
